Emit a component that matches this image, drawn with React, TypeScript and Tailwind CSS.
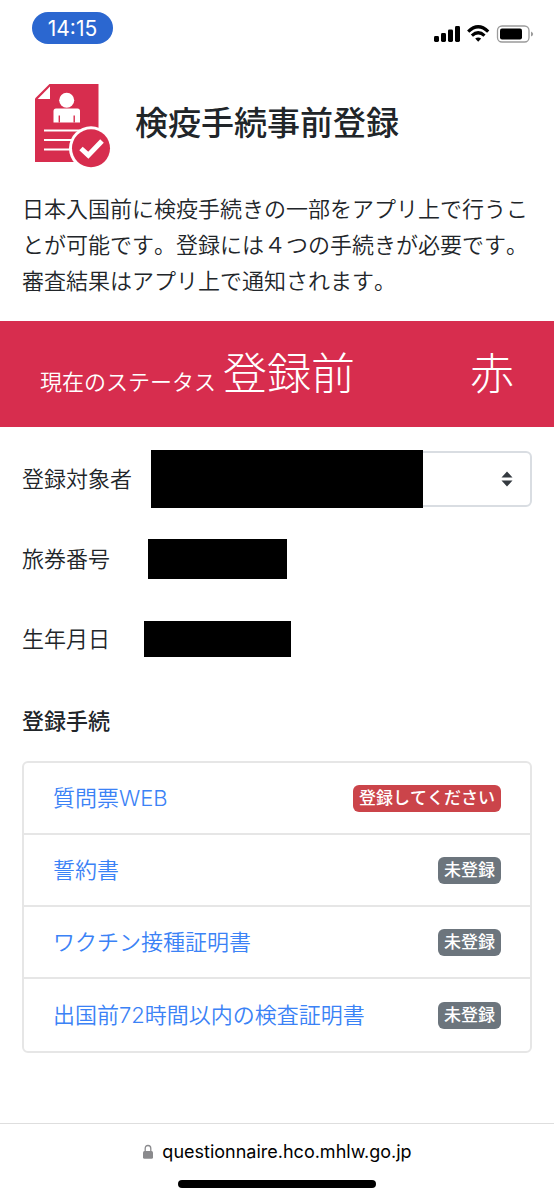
import React from "react";

type Procedure = { name: string; status: string; urgent?: boolean };

const procedures: Procedure[] = [
  { name: "質問票WEB", status: "登録してください", urgent: true },
  { name: "誓約書", status: "未登録" },
  { name: "ワクチン接種証明書", status: "未登録" },
  { name: "出国前72時間以内の検査証明書", status: "未登録" },
];

function StatusBar() {
  return (
    <div className="flex items-start justify-between pt-3 pr-5 pl-8">
      <div className="flex h-8 w-[81px] items-center justify-center rounded-full bg-[#2b67d0] pt-0.5 text-[21px] font-normal text-white">
        14:15
      </div>
      <svg className="mt-3 h-5 w-[100px]" viewBox="0 0 100 20" aria-hidden="true">
        <rect x="0" y="12" width="5" height="6" rx="1.4" />
        <rect x="7" y="9" width="5" height="9" rx="1.4" />
        <rect x="14" y="5.5" width="5" height="12.5" rx="1.4" />
        <rect x="21" y="2" width="5" height="16" rx="1.4" />
        <g fill="none" stroke="#000" strokeWidth="3.2">
          <path d="M34.2 7.6 Q44.2 -2.1 54.2 7.6" />
          <path d="M37.9 11.6 Q44.2 5.9 50.5 11.6" />
        </g>
        <path d="M41.2 14.6 Q44.2 12.3 47.2 14.6 L44.2 17.8 Z" />
        <rect x="63.5" y="2" width="31.5" height="16" rx="4.5" fill="none" stroke="#9b9b9b" strokeWidth="1.3" />
        <rect x="66" y="4.5" width="22" height="11" rx="2" />
        <path d="M97 7.5 Q99.2 8.5 99.2 10 Q99.2 11.5 97 12.5 Z" fill="#9b9b9b" />
      </svg>
    </div>
  );
}

function DocumentIcon() {
  return (
    <svg className="h-[84px] w-[76px] shrink-0" viewBox="0 0 76 84" aria-hidden="true">
      <path d="M14.5 0H63.5V78H0V14.5Z" fill="#d72d4e" />
      <path d="M15 2.5V15H2.7Z" fill="#fff" />
      <circle cx="31.7" cy="16.3" r="7.5" fill="#fff" />
      <path d="M21 24.5H42.5Q45 24.5 45 27V38.5H18.5V27Q18.5 24.5 21 24.5Z" fill="#fff" />
      <path d="M24.3 31.5V38.5M39.2 31.5V38.5" stroke="#d72d4e" strokeWidth="1.4" />
      <path d="M9 46.5H45M9 56H38M9 65.5H37" stroke="#fff" strokeWidth="1.9" />
      <circle cx="56" cy="64.3" r="22" fill="#fff" />
      <circle cx="56" cy="64.3" r="19" fill="#d72d4e" />
      <path d="M46 64.5L53.3 71.2L67 57" fill="none" stroke="#fff" strokeWidth="5" />
    </svg>
  );
}

export default function App() {
  return (
    <div className="flex min-h-screen flex-col bg-white font-['Inter','Noto_Sans_CJK_JP',sans-serif] text-[22px] leading-9 font-[350] text-[#212529]">
      <StatusBar />

      <header className="mt-10 flex items-start gap-6 px-[35px]">
        <DocumentIcon />
        <h1 className="text-[33px] leading-[78px] font-medium">検疫手続事前登録</h1>
      </header>

      <main className="flex-1 [font-kerning:none]">
        <p className="mt-[23px] px-[22px]">
          日本入国前に検疫手続きの一部をアプリ上で行うことが可能です。登録には４つの手続きが必要です。審査結果はアプリ上で通知されます。
        </p>

        <section className="mt-[22px] flex h-[106px] items-center justify-between bg-[#d72d4e] px-10 text-white">
          <div className="flex items-baseline gap-[7px]">
            <span>現在のステータス</span>
            <strong className="text-[44px] leading-[66px] font-light">登録前</strong>
          </div>
          <strong className="text-[44px] leading-[66px] font-light">赤</strong>
        </section>

        <div className="px-[22px] pt-6">
          <div className="flex items-center gap-[19px]">
            <label htmlFor="registrant" className="shrink-0">登録対象者</label>
            <div className="relative flex-1">
              <select
                id="registrant"
                className="block h-14 w-full appearance-none rounded-md border-2 border-[#d9dde2] bg-white px-4"
              />
              <div className="pointer-events-none absolute inset-y-0 left-0 -my-px w-[272px] bg-black" />
              <svg
                className="pointer-events-none absolute inset-y-0 right-[19px] my-auto h-4 w-3"
                viewBox="0 0 12 16"
                fill="#343a40"
                aria-hidden="true"
              >
                <path d="M6 0.5L11.5 6.5H0.5ZM0.5 9.5H11.5L6 15.5Z" />
              </svg>
            </div>
          </div>

          <dl>
            <div className="mt-8 flex h-10 items-center">
              <dt className="w-[126px]">旅券番号</dt>
              <dd className="h-10 w-[139px] bg-black" />
            </div>
            <div className="mt-10 flex h-10 items-center">
              <dt className="w-[122px]">生年月日</dt>
              <dd className="h-9 w-[147px] bg-black" />
            </div>
          </dl>

          <h2 className="mt-11 font-medium">登録手続</h2>

          <ul className="mt-[22px] divide-y-2 divide-[#e6e6e6] rounded-md border-2 border-[#e6e6e6]">
            {procedures.map((item) => (
              <li key={item.name} className="flex h-[72px] items-center justify-between px-[29px]">
                <a href="#" className="text-[#3b82f6]">{item.name}</a>
                <span
                  className={
                    item.urgent
                      ? "rounded-md bg-[#cb444a] px-1.5 text-[17px] leading-[27px] font-medium text-white"
                      : "rounded-md bg-[#6c757d] px-1.5 text-[17px] leading-[27px] font-medium text-white"
                  }
                >
                  {item.status}
                </span>
              </li>
            ))}
          </ul>
        </div>
      </main>

      <footer className="flex flex-col items-center border-t border-[#dedede] pt-4 pb-3 text-black">
        <div className="flex items-center gap-2 text-lg leading-6 font-normal">
          <svg className="h-4 w-3" viewBox="0 0 12 16" aria-hidden="true">
            <path d="M3.2 8V4.5Q3.2 1.5 6 1.5Q8.8 1.5 8.8 4.5V8" fill="none" stroke="#8a8a8d" strokeWidth="1.3" />
            <rect x="1" y="7" width="10" height="7.8" rx="1.5" fill="#8a8a8d" />
          </svg>
          questionnaire.hco.mhlw.go.jp
        </div>
        <div className="mt-4 h-2 w-[198px] rounded-full bg-black" />
      </footer>
    </div>
  );
}
